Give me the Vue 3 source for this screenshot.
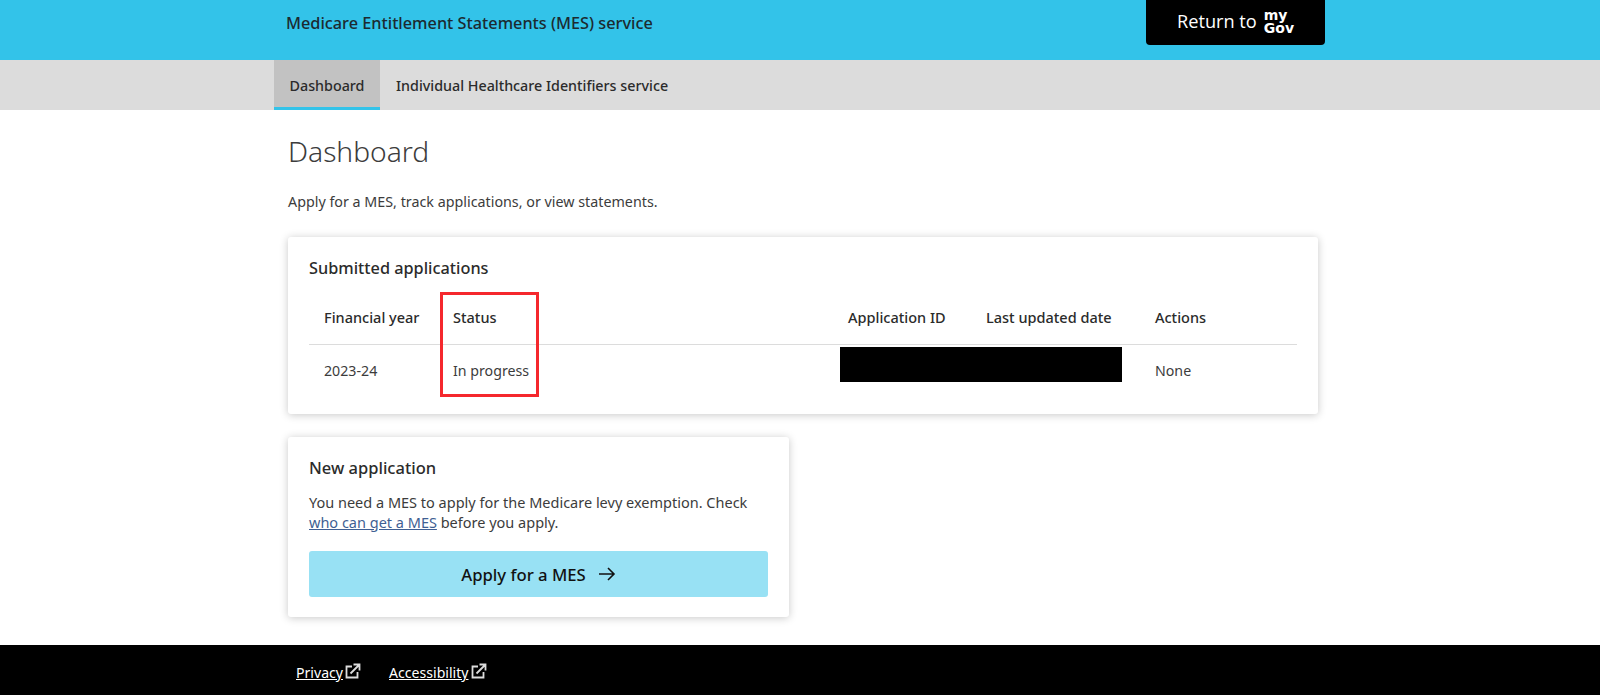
<script setup>
const headers = ['Financial year', 'Status', 'Application ID', 'Last updated date', 'Actions']
</script>

<template>
  <div class="page">
    <header class="top">
      <div class="top-inner">
        <div class="service">Medicare Entitlement Statements (MES) service</div>
        <a class="mygov" href="#">
          <span class="return">Return to</span>
          <span class="logo"><span>my</span><span>Gov</span></span>
        </a>
      </div>
    </header>
    <nav class="nav">
      <div class="nav-inner">
        <a class="tab active" href="#">Dashboard</a>
        <a class="tab" href="#">Individual Healthcare Identifiers service</a>
      </div>
    </nav>
    <main class="main">
      <h1>Dashboard</h1>
      <p class="intro">Apply for a MES, track applications, or view statements.</p>
      <section class="card submitted">
        <h2>Submitted applications</h2>
        <div class="table-wrap">
          <table>
            <colgroup>
              <col class="c1" /><col class="c2" /><col class="c3" /><col class="c4" /><col class="c5" />
            </colgroup>
            <thead>
              <tr><th v-for="h in headers" :key="h">{{ h }}</th></tr>
            </thead>
            <tbody>
              <tr>
                <td>2023-24</td>
                <td>In progress</td>
                <td></td>
                <td></td>
                <td>None</td>
              </tr>
            </tbody>
          </table>
          <div class="redact"></div>
          <div class="highlight"></div>
        </div>
      </section>
      <section class="card new-app">
        <h2>New application</h2>
        <p>You need a MES to apply for the Medicare levy exemption. Check <a href="#">who can get a MES</a> before you apply.</p>
        <a class="apply" href="#">
          Apply for a MES
          <svg width="18" height="16" viewBox="0 0 18 16" fill="none" stroke="#111" stroke-width="1.6">
            <path d="M1 8h15M10 2l6 6-6 6" />
          </svg>
        </a>
      </section>
    </main>
    <footer class="footer">
      <div class="footer-inner">
        <a href="#">Privacy<svg class="ext" width="16" height="16" viewBox="0 0 16 16" fill="none" stroke="#ddd" stroke-width="1.800"><path d="M7 3.500H1.500v11h11V9" /><path d="M5.500 10.500l8-8M8.500 1.500h6v6" /></svg></a>
        <a href="#">Accessibility<svg class="ext" width="16" height="16" viewBox="0 0 16 16" fill="none" stroke="#ddd" stroke-width="1.800"><path d="M7 3.500H1.500v11h11V9" /><path d="M5.500 10.500l8-8M8.500 1.500h6v6" /></svg></a>
      </div>
    </footer>
  </div>
</template>

<style>
html, body { margin: 0; background: #fff; }
</style>

<style scoped>
.page {
  width: 1600px;
  height: 695px;
  overflow: hidden;
  display: flex;
  flex-direction: column;
  font-family: "Noto Sans", "Open Sans", sans-serif;
  color: #3c3c3c;
  font-size: 14.300px;
}
.top { height: 60px; background: #33c3e9; flex: none; }
.top-inner {
  width: 1052px;
  margin: 0 auto;
  padding: 0 0 0 12px;
  box-sizing: border-box;
  position: relative;
}
.service { font-size: 16.300px; font-weight: 500; color: #1c2a30; line-height: 46px; }
.mygov {
  width: 179px;
  height: 45px;
  background: #000;
  border-radius: 0 0 4px 4px;
  color: #fff;
  text-decoration: none;
  display: flex;
  align-items: center;
  justify-content: center;
  gap: 7px;
  position: absolute;
  right: 1px;
  top: 0;
}
.return { font-size: 18.200px; font-family: "Open Sans", sans-serif; margin-top: -4px; }
.logo {
  display: flex;
  flex-direction: column;
  font-family: "DejaVu Sans", sans-serif;
  font-weight: 700;
  font-size: 14px;
  line-height: 13px;
  margin-top: -2px;
}
.nav { height: 50px; background: #dcdcdc; flex: none; }
.nav-inner { width: 1052px; margin: 0 auto; display: flex; height: 50px; }
.tab {
  padding: 0 16px;
  line-height: 52px;
  font-size: 14.300px;
  font-weight: 500;
  color: #2b2b2b;
  text-decoration: none;
  box-sizing: border-box;
}
.tab.active { background: #c2c2c2; border-bottom: 3px solid #33c3e9; width: 106px; padding: 0; text-align: center; }
.main {
  flex: 1;
  width: 1052px;
  margin: 0 auto;
  padding: 0 8px 0 14px;
  box-sizing: border-box;
}
h1 {
  margin: 19px 0 0;
  font-size: 28.200px;
  font-weight: 300;
  line-height: 44px;
  color: #3c3c3c;
}
.intro { margin: 17px 0 0; line-height: 24px; }
.card {
  background: #fff;
  border-radius: 3px;
  box-shadow: 0 1px 8px rgba(0, 0, 0, 0.22);
  box-sizing: border-box;
}
h2 { margin: 0; font-size: 16.300px; font-weight: 500; color: #2b2b2b; line-height: 24px; }
.submitted { margin-top: 23px; height: 177px; padding: 19px 21px 0; }
.table-wrap { position: relative; margin-top: 13px; }
table { width: 988px; border-collapse: collapse; table-layout: fixed; }
.c1 { width: 129px; }
.c2 { width: 395px; }
.c3 { width: 138px; }
.c4 { width: 169px; }
.c5 { width: 157px; }
th {
  text-align: left;
  font-weight: 500;
  font-size: 14.500px;
  color: #2b2b2b;
  height: 51px;
  padding: 0 15px 2px;
  border-bottom: 1px solid #dcdcdc;
  white-space: nowrap;
  box-sizing: border-box;
}
td { height: 51px; padding: 0 15px; white-space: nowrap; font-size: 14.200px; }
.redact { position: absolute; left: 531px; top: 54px; width: 282px; height: 35px; background: #000; }
.highlight {
  position: absolute;
  left: 131px;
  top: -1px;
  width: 99px;
  height: 105px;
  box-sizing: border-box;
  border: 3px solid #f5282d;
}
.new-app { margin-top: 23px; width: 501px; height: 180px; padding: 19px 21px 0; }
.new-app h2 { font-size: 16.500px; }
.new-app p { margin: 13px 0 0; line-height: 19.500px; font-size: 14.500px; }
.new-app p a { color: #3f5f93; }
.apply {
  margin-top: 19px;
  height: 46px;
  background: #98e1f4;
  border-radius: 3px;
  display: flex;
  align-items: center;
  justify-content: center;
  gap: 12px;
  font-size: 16.700px;
  font-weight: 500;
  color: #111;
  text-decoration: none;
}
.footer { height: 50px; background: #000; flex: none; }
.footer-inner { width: 1052px; margin: 0 auto; padding-left: 22px; box-sizing: border-box; display: flex; gap: 28px; line-height: 55px; }
.footer a { color: #fff; font-size: 14.100px; }
.ext { margin-left: 2px; vertical-align: -1px; }
</style>
